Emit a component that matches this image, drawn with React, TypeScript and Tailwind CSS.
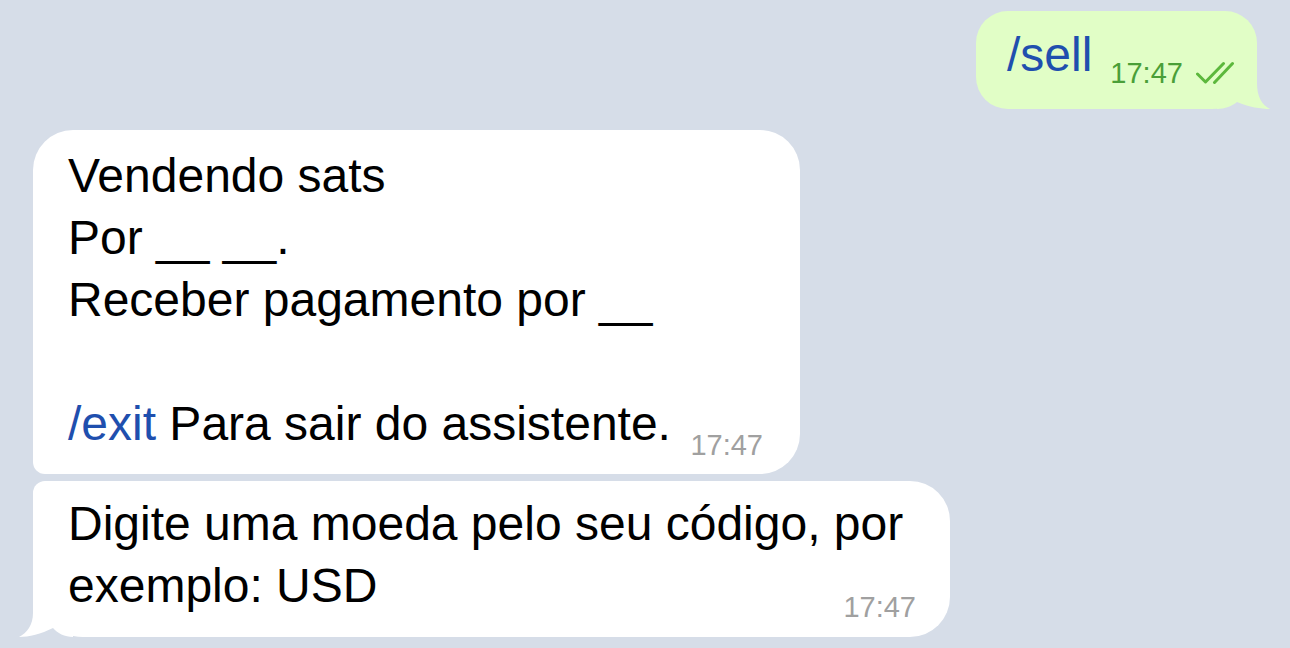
const Ticks = () => (
  <svg width="38" height="24" viewBox="0 0 38 24" fill="none" className="mb-[1px] shrink-0">
    <path d="M1.5 13 L9.5 21 L27.5 2.5" stroke="#5cb83c" strokeWidth="3" strokeLinecap="round" strokeLinejoin="round" />
    <path d="M18.5 21.5 L36.5 2.5" stroke="#5cb83c" strokeWidth="3" strokeLinecap="round" />
  </svg>
);

const OutTail = () => (
  <svg width="53" height="45" viewBox="0 0 53 45" className="absolute bottom-0 right-[-13px]">
    <path d="M0 0 H40 V19 C40 33 45 41 53 45 C44 45 32 43 20 38 C15 42 8 45 0 45 Z" fill="#e1fec6" />
  </svg>
);

const InTail = () => (
  <svg width="54" height="50" viewBox="0 0 54 50" className="absolute bottom-0 left-[-14px]">
    <path d="M14 0 V26 C14 38 8 46 0 50 C10 50 22 47 34 41 C38 46 46 50 54 50 L54 0 Z" fill="#ffffff" />
  </svg>
);

const Time = ({ children, className }: { children: string; className: string }) => (
  <span className={`text-[29px] leading-[20px] shrink-0 ${className}`}>{children}</span>
);

export default function App() {
  return (
    <div className="h-[648px] w-full overflow-hidden bg-[#d6dde8] flex flex-col pt-[11px] font-['Liberation_Sans',Arial,sans-serif] text-black">
      {/* outgoing */}
      <div className="relative self-end mr-[33px] w-[281px] h-[98px] rounded-[32px] rounded-br-[45px] bg-[#e1fec6] pl-[31px] pr-[24px] pt-[13px]">
        <OutTail />
        <div className="relative flex items-end">
          <span className="text-[48px] leading-[62px] text-[#1f4fae]">/sell</span>
          <Time className="ml-[18px] mb-[3px] text-[#4a9f38]">17:47</Time>
          <span className="ml-[13px]">
            <Ticks />
          </span>
        </div>
      </div>

      {/* incoming 1 */}
      <div className="ml-[33px] mt-[21px] w-[767px] rounded-[40px] rounded-bl-[12px] bg-white pl-[35px] pr-[37px] pt-[15px] pb-[19px] text-[48px] leading-[62px]">
        <div>Vendendo sats</div>
        <div>Por __ __.</div>
        <div>Receber pagamento por __</div>
        <div className="h-[62px]" />
        <div className="flex items-end justify-between">
          <span className="whitespace-nowrap">
            <span className="text-[#1f4fae]">/exit</span> Para sair do assistente.
          </span>
          <Time className="text-[#a0a0a0]">17:47</Time>
        </div>
      </div>

      {/* incoming 2 */}
      <div className="relative ml-[33px] mt-[7px] w-[917px] rounded-[40px] rounded-tl-[12px] rounded-bl-[50px] bg-white pl-[35px] pr-[34px] pt-[12px] pb-[20px] text-[48px] leading-[62px]">
        <InTail />
        <div className="relative whitespace-nowrap">Digite uma moeda pelo seu código, por</div>
        <div className="relative flex items-end justify-between">
          <span>exemplo: USD</span>
          <Time className="text-[#a0a0a0]">17:47</Time>
        </div>
      </div>
    </div>
  );
}
